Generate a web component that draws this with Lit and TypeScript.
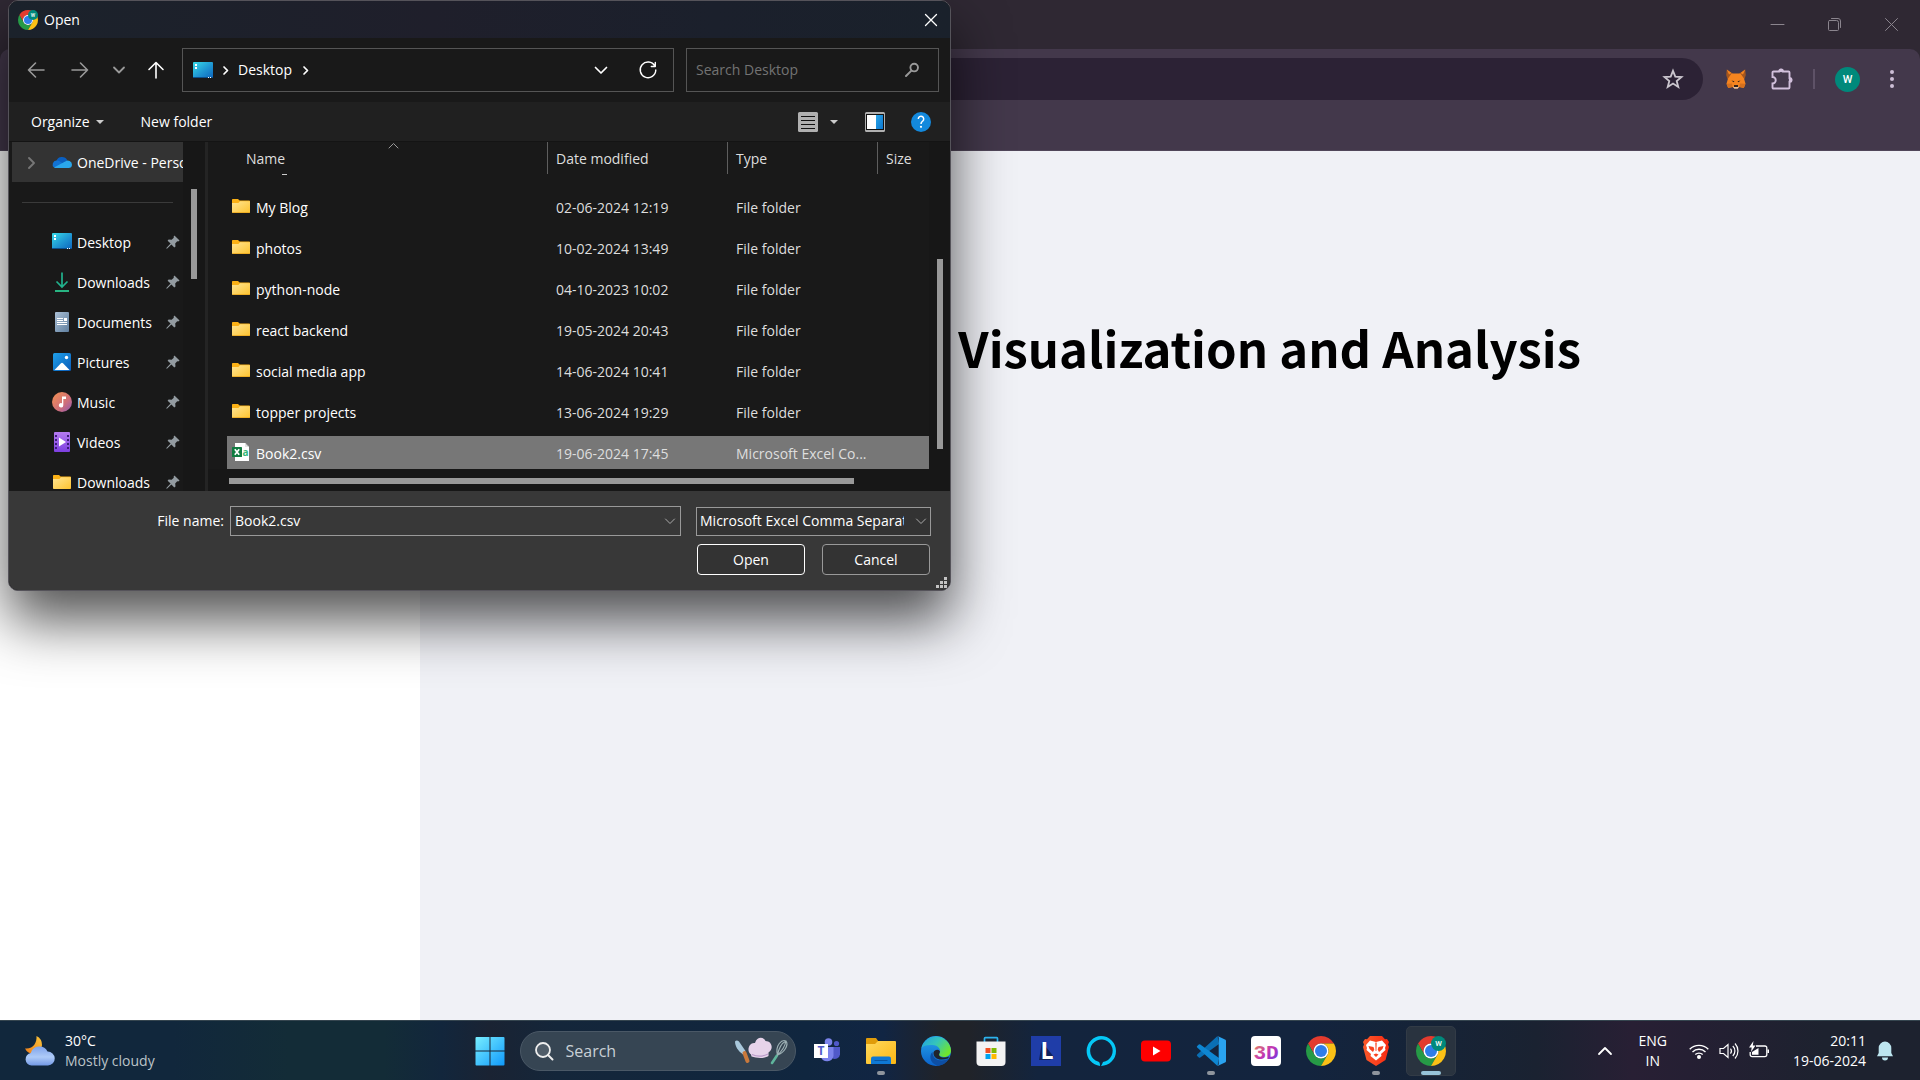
import { LitElement, html, svg, css, nothing, type TemplateResult } from "lit";
import { customElement } from "lit/decorators.js";

/* ---------- shared icons ---------- */

const chrome = (badge: boolean) => html`<svg viewBox="0 0 48 48" aria-hidden="true">
  <path fill="#e33b2e" d="M3.22 12A24 24 0 0 1 44.78 12L24 12A12 12 0 0 0 13.61 30Z" />
  <path fill="#269a46" d="M3.22 12L13.61 30A12 12 0 0 0 34.39 30L24 48A24 24 0 0 1 3.22 12Z" />
  <path fill="#fbc116" d="M44.78 12A24 24 0 0 1 24 48L34.39 30A12 12 0 0 0 24 12Z" />
  <circle cx="24" cy="24" r="12" fill="#fff" />
  <circle cx="24" cy="24" r="9.6" fill="#2f7de9" />
  ${badge
    ? svg`<circle cx="36" cy="12" r="12" fill="#00897b"/><text x="36" y="16.5" text-anchor="middle" font-family="Roboto, sans-serif" font-weight="500" font-size="12" fill="#fff">W</text>`
    : nothing}
</svg>`;

const stroke = (d: string, box = "0 0 16 16", width = 1.4) => html`<svg viewBox=${box} aria-hidden="true">
  <path d=${d} fill="none" stroke="currentColor" stroke-width=${width} stroke-linecap="round" stroke-linejoin="round" />
</svg>`;

const folder = html`<svg viewBox="0 0 18 16" aria-hidden="true">
  <defs><linearGradient id="fo" x1="0" y1="0" x2="1" y2="1"><stop offset="0" stop-color="#ffe594" /><stop offset="1" stop-color="#fdc32f" /></linearGradient></defs>
  <path fill="#fbb116" d="M0 1.8A.8.8 0 0 1 .8 1H6l1.6 1.4H17.2a.8.8 0 0 1 .8.8V6H0Z" />
  <path fill="url(#fo)" d="M0 5H6.4L8 3.2H18V14.2a.8.8 0 0 1-.8.8H.8a.8.8 0 0 1-.8-.8Z" />
  <path fill="#e9a51c" d="M.2 14.2h17.6a.8.8 0 0 1-.6.8H.8a.8.8 0 0 1-.6-.8Z" />
</svg>`;

const desktop = html`<svg viewBox="0 0 20 16" aria-hidden="true">
  <defs><linearGradient id="dk" x1="0" y1="0" x2="1" y2="1"><stop offset="0" stop-color="#38dbe8" /><stop offset=".55" stop-color="#1f96d2" /><stop offset="1" stop-color="#0d65bd" /></linearGradient></defs>
  <rect width="20" height="16" rx="1" fill="url(#dk)" /><rect y="15" width="20" height="1" fill="#0b4f8c" />
  <path fill="#fff" d="M2 2h2v2H2zM2 5h2v2H2zM15 15h1v1h-1zM17 15h1v1h-1z" />
</svg>`;

const pin = html`<svg viewBox="0 0 14 14" aria-hidden="true">
  <path fill="#939ba1" d="M8.4.4L13.6 5.600 12.200 6.400l-1-.2L9.200 8.400l.3 3-1.200 1L5.400 9.400 1.200 13.400.3 13.700.6 12.800 4.600 8.600 1.600 5.700l1-1.200 3 .3L7.800 2.800 7.600 1.800Z" />
</svg>`;

const placeIcons: Record<string, TemplateResult> = {
  cloud: html`<svg viewBox="0 0 20 20" aria-hidden="true">
    <path fill="#0a5fc0" d="M4.400 9A6 6 0 0 1 15.300 8.200L10 13Z" />
    <path fill="#1272d2" d="M4.400 8.600A4 4 0 0 1 7.600 9.200L13 13 2 15.600A4 4 0 0 1 4.400 8.600Z" />
    <path fill="#2aa7ec" d="M2 15.400L13.200 9.400A4.200 4.200 0 0 1 20 12.800 3.400 3.400 0 0 1 16.600 16H4A4 4 0 0 1 2 15.400Z" />
  </svg>`,
  desktop: html`<svg viewBox="0 -2 20 20" aria-hidden="true">
    <defs><linearGradient id="dp" x1="0" y1="0" x2="1" y2="1"><stop offset="0" stop-color="#38dbe8" /><stop offset=".55" stop-color="#1f96d2" /><stop offset="1" stop-color="#0d65bd" /></linearGradient></defs>
    <rect y="-1" width="20" height="16" rx="1" fill="url(#dp)" /><rect y="14" width="20" height="1" fill="#0b4f8c" />
    <path fill="#fff" d="M2 1h2v2H2zM2 4h2v2H2zM15 14h1v1h-1zM17 14h1v1h-1z" />
  </svg>`,
  download: html`<svg viewBox="0 0 20 20" aria-hidden="true">
    <path d="M10 .5V15M4.500 9.500L10 15l5.500-5.500" fill="none" stroke="#21b28d" stroke-width="1.700" />
    <path d="M3 19h14" stroke="#2bc78f" stroke-width="1.800" />
  </svg>`,
  document: html`<svg viewBox="0 0 20 20" aria-hidden="true">
    <defs><linearGradient id="dc" x1="0" y1="0" x2="1" y2="1"><stop offset="0" stop-color="#abc0d6" /><stop offset="1" stop-color="#5f7f9f" /></linearGradient></defs>
    <rect x="3" width="14" height="20" rx="1" fill="url(#dc)" />
    <path stroke="#fff" d="M5 6.500h6M5 8.500h6M5 10.500h10M5 12.500h10" /><rect x="12" y="6" width="3" height="3" fill="#fff" />
  </svg>`,
  picture: html`<svg viewBox="0 0 20 20" aria-hidden="true">
    <defs><linearGradient id="pc" x1="0" y1="0" x2="1" y2="1"><stop offset="0" stop-color="#1fa0ea" /><stop offset="1" stop-color="#0a5cb8" /></linearGradient></defs>
    <rect x="1" y="1" width="18" height="18" rx="1.500" fill="url(#pc)" />
    <path fill="#fff" d="M2.500 18L9 11.200a1.400 1.400 0 0 1 2 0L17.500 18Z" /><circle cx="14.500" cy="5.500" r="1.700" fill="#fff" />
  </svg>`,
  music: html`<svg viewBox="0 0 20 20" aria-hidden="true">
    <defs><linearGradient id="mu" x1="0" y1="0" x2="1" y2="1"><stop offset=".1" stop-color="#ee8c57" /><stop offset=".6" stop-color="#cf6f79" /><stop offset="1" stop-color="#8d57b4" /></linearGradient></defs>
    <circle cx="10" cy="10" r="10" fill="url(#mu)" />
    <path fill="#fff" d="M10 4.500h4V7h-2.700v6.200A2.200 2.200 0 1 1 10 11.200Z" />
  </svg>`,
  video: html`<svg viewBox="0 0 20 20" aria-hidden="true">
    <defs><linearGradient id="vi" x1="0" y1="0" x2="0" y2="1"><stop offset="0" stop-color="#b57bf0" /><stop offset="1" stop-color="#7d3fe0" /></linearGradient></defs>
    <rect x="2" width="16" height="20" rx="1" fill="url(#vi)" />
    <path stroke="#3c1d78" stroke-width="2" stroke-dasharray="2 2" d="M4 3v16M16 3v16" />
    <path fill="#fff" d="M7 5.500L14 10l-7 4.500Z" />
  </svg>`,
  folder: html`<svg viewBox="0 0 20 20" aria-hidden="true">
    <defs><linearGradient id="fp" x1="0" y1="0" x2="1" y2="1"><stop offset="0" stop-color="#ffe594" /><stop offset="1" stop-color="#fdc32f" /></linearGradient></defs>
    <path fill="#fbb116" d="M1 3.800a.8.800 0 0 1 .8-.8H7l1.600 1.400h9.600a.8.800 0 0 1 .8.800V8H1Z" />
    <path fill="url(#fp)" d="M1 7H7.400L9 5.200H19V16.200a.8.800 0 0 1-.8.800H1.800a.8.800 0 0 1-.8-.8Z" />
  </svg>`,
};

const csvIcon = html`<svg viewBox="0 0 18 18" aria-hidden="true">
  <path fill="#fff" d="M3 0H13.500L17 3.500V18H3Z" /><path fill="#777" d="M13.500 0L17 3.500h-3.500Z" /><path fill="#e4e4e4" d="M13 0V4h4L13 0Z" />
  <rect y="4" width="10" height="10" rx=".6" fill="#107c41" />
  <path d="M2.800 6.200L7.200 11.800M7.200 6.200L2.800 11.800" stroke="#fff" stroke-width="1.700" />
  <text x="10.600" y="12.800" font-family="Open Sans, sans-serif" font-size="10" font-weight="700" fill="#35b878">a</text>
</svg>`;

/* ---------- data ---------- */

const places: Array<[string, string]> = [
  ["desktop", "Desktop"],
  ["download", "Downloads"],
  ["document", "Documents"],
  ["picture", "Pictures"],
  ["music", "Music"],
  ["video", "Videos"],
  ["folder", "Downloads"],
];

interface FileRow { name: string; date: string; type: string; selected?: boolean }
const files: FileRow[] = [
  { name: "My Blog", date: "02-06-2024 12:19", type: "File folder" },
  { name: "photos", date: "10-02-2024 13:49", type: "File folder" },
  { name: "python-node", date: "04-10-2023 10:02", type: "File folder" },
  { name: "react backend", date: "19-05-2024 20:43", type: "File folder" },
  { name: "social media app", date: "14-06-2024 10:41", type: "File folder" },
  { name: "topper projects", date: "13-06-2024 19:29", type: "File folder" },
  { name: "Book2.csv", date: "19-06-2024 17:45", type: "Microsoft Excel Co...", selected: true },
];

const base = css`
  :host, *, *::before, *::after { box-sizing: border-box; }
  svg { display: block; width: 100%; height: 100%; overflow: visible; }
  button { font: inherit; color: inherit; background: none; border: 0; padding: 0; margin: 0; }
  input, select { font: inherit; color: inherit; margin: 0; }
`;

/* ---------- open-file dialog ---------- */

@customElement("file-dialog")
export class FileDialog extends LitElement {
  static styles = [base, css`
    :host {
      display: block; width: 943px; border-radius: 10px; overflow: hidden;
      border: 1px solid #55535a; color: #fff; background: #191919;
      font: 14px/20px "Segoe UI", "Open Sans", sans-serif;
      box-shadow: 0 30px 56px rgba(0, 0, 0, .68);
    }
    .title { display: flex; align-items: center; height: 37px; padding: 0 12px 0 9px; gap: 6px;
      background: linear-gradient(90deg, #1b222b, #1f1f2b 45%, #1b202c 75%, #1a212b); }
    .title h2 { flex: 1; margin: 0; font-size: 14px; font-weight: 400; }
    .logo { width: 20px; height: 20px; }
    .close { width: 14px; height: 14px; }
    .nav { display: flex; align-items: center; height: 64px; padding: 0 11px 0 18px; }
    .arrow { width: 18px; height: 18px; color: #999; }
    .arrow + .arrow { margin-left: 26px; }
    .nav .small { width: 14px; height: 14px; margin: 0 21px 0 23px; color: #999; }
    .nav .up { color: #fff; margin-right: 17px; }
    .address { flex: 1; display: flex; align-items: center; height: 44px; border: 1px solid #555; padding: 0 16px 0 10px; }
    .here { color: inherit; text-decoration: none; }
    .screen { width: 20px; height: 16px; margin-right: 8px; }
    .crumb { width: 9px; height: 9px; margin-right: 8px; }
    .crumb.last { margin: 0 auto 0 9px; }
    .drop { width: 14px; height: 14px; margin-right: 31px; }
    .reload { width: 18px; height: 18px; }
    .search { display: flex; align-items: center; width: 253px; height: 44px; border: 1px solid #555; margin-left: 12px; padding: 0 18px 0 9px; }
    .search input { flex: 1; min-width: 0; border: 0; background: none; padding: 0; outline: 0; }
    .search input::placeholder { color: #737373; opacity: 1; }
    .lens { width: 16px; height: 16px; color: #999; }
    .tools { display: flex; align-items: center; height: 39px; padding: 0 19px 0 22px; background: #202020; }
    .organize { display: flex; align-items: center; gap: 6px; margin-right: 37px; }
    .caret { width: 8px; height: 4px; }
    .view { display: flex; align-items: center; gap: 12px; margin-left: auto; margin-right: 27px; }
    .icon20 { width: 20px; height: 20px; }
    .help { margin-left: 26px; }
    .body { display: grid; grid-template-columns: 174px 22px 3px 1fr; height: 350px; overflow: hidden; border-top: 1px solid #141414; }
    .places { margin: 0 0 0 3px; padding: 0; list-style: none; overflow: hidden; }
    .places li { display: flex; align-items: center; height: 40px; padding: 2px 0 0 40px; white-space: nowrap; }
    .places li.drive { background: #333; padding-left: 13px; }
    .places li.rule { padding: 0 10px; }
    .places li.rule::before { content: ""; flex: 1; height: 1px; background: #3a3a3a; }
    .expand { flex: none; width: 12px; height: 12px; margin-right: 15px; color: #777; }
    .places .icon20 { flex: none; margin: 0 5px 2px 0; }
    .pin { width: 14px; height: 14px; margin: 0 3px 2px auto; }
    .track { background: #171717; padding: 47px 8px 0; }
    .thumb { height: 90px; background: #999; }
    .split { background: #242424; }
    .list { display: grid; grid-template-columns: 1fr 21px; grid-template-rows: auto 1fr; }
    table { margin-left: 19px; width: calc(100% - 19px); table-layout: fixed; border-spacing: 0; }
    th { height: 32px; padding: 2px 0 0 8px; border-left: 1px solid #5e5e5e; text-align: left; font-weight: 400; color: #dedede; vertical-align: middle; white-space: nowrap; }
    th:first-child { padding-left: 18px; border-left-color: transparent; position: relative; }
    .sort { position: absolute; left: 160px; top: 0; width: 11px; height: 7px; color: #999; }
    .c1 { width: 320px; } .c2 { width: 180px; } .c3 { width: 150px; }
    td { height: 41px; padding: 2px 0 0 9px; border-top: 8px solid transparent; background-clip: padding-box; color: #dedede; white-space: nowrap; }
    td:first-child { padding-left: 5px; color: #fff; }
    .gap td:first-child { height: 8px; border: 0; padding: 0 0 0 55px; vertical-align: top; line-height: 1px; font-size: 1px; }
    .gap i { display: block; width: 5px; height: 1px; background: #ccc; }
    .picked td { background-color: #777; }
    .name { display: flex; align-items: center; gap: 6px; }
    .glyph { width: 18px; height: 18px; margin-bottom: 4px; }
    .glyph.dir { height: 16px; }
    .vtrack { background: #171717; padding: 117px 7px 0 8px; }
    .vthumb { height: 190px; background: #999; }
    .htrack { grid-column: 1 / 3; background: #171717; padding: 9px 96px 0 21px; }
    .hthumb { height: 6px; background: #999; }
    .foot { display: grid; grid-template-columns: 215px 451px 1fr; align-items: center; background: #383838; height: 99px; padding: 15px 19px 15px 0; column-gap: 6px; align-content: start; row-gap: 8px; }
    .foot label { text-align: right; }
    .combo { display: flex; align-items: center; height: 30px; border: 1px solid #999; padding: 0 4px; }
    .combo input { flex: 1; min-width: 0; border: 0; background: none; padding: 0; outline: 0; }
    .combo button { width: 12px; height: 12px; color: #aaa; }
    .kind { display: grid; align-items: center; margin-left: 9px; height: 29px; }
    .kind select { grid-area: 1 / 1; appearance: none; width: 100%; height: 29px; border: 1px solid #999; border-radius: 0; background: #333; padding: 0 26px 0 3px; text-overflow: clip; overflow: hidden; }
    .kind span { grid-area: 1 / 1; justify-self: end; width: 12px; height: 12px; margin-right: 4px; color: #aaa; pointer-events: none; }
    .actions { grid-column: 3; display: grid; grid-template-columns: 1fr 1fr; gap: 17px; margin: 0 1px 0 10px; }
    .actions button { height: 31px; border: 1px solid #999; border-radius: 4px; background: #333; }
    .actions .main { border-color: #fff; }
    .grip { position: absolute; right: 3px; bottom: 2px; width: 11px; height: 11px; }
  `];

  render() {
    return html`
      <header class="title">
        <span class="logo">${chrome(true)}</span>
        <h2>Open</h2>
        <button class="close" aria-label="Close">${stroke("M1.500 1.500L12.500 12.500M12.500 1.500L1.500 12.500", "0 0 14 14", 1.3)}</button>
      </header>
      <nav class="nav">
        <button class="arrow" aria-label="Back">${stroke("M17 9H1.500M8.500 2L1.500 9l7 7", "0 0 18 18", 1.6)}</button>
        <button class="arrow" aria-label="Forward">${stroke("M1 9H16.500M9.500 2l7 7-7 7", "0 0 18 18", 1.6)}</button>
        <button class="small" aria-label="Recent locations">${stroke("M2 4.500L7 9.500l5-5", "0 0 14 14", 1.8)}</button>
        <button class="arrow up" aria-label="Up">${stroke("M9 17V1.500M2 8.500l7-7 7 7", "0 0 18 18", 1.6)}</button>
        <div class="address">
          <span class="screen">${desktop}</span>
          <span class="crumb">${stroke("M3 1l3.500 3.500L3 8", "0 0 9 9", 1.7)}</span>
          <a class="here" href="#desktop">Desktop</a>
          <span class="crumb last">${stroke("M3 1l3.500 3.500L3 8", "0 0 9 9", 1.7)}</span>
          <button class="drop" aria-label="Previous locations">${stroke("M1.500 4.500L7 10l5.500-5.500", "0 0 14 14", 1.7)}</button>
          <button class="reload" aria-label="Refresh">${stroke("M15.800 5A7.800 7.800 0 1 0 16.800 9M16.300 1.500V5.500H12.300", "0 0 18 18", 1.4)}</button>
        </div>
        <div class="search">
          <input type="text" aria-label="Search Desktop" placeholder="Search Desktop" />
          <span class="lens"><svg viewBox="0 0 16 16"><circle cx="10.200" cy="5.600" r="3.800" fill="none" stroke="currentColor" stroke-width="1.900" /><path d="M7.400 8.600L2 14" stroke="currentColor" stroke-width="2" stroke-linecap="round" /></svg></span>
        </div>
      </nav>
      <div class="tools">
        <button class="organize">Organize <span class="caret"><svg viewBox="0 0 8 4"><path fill="#ccc" d="M0 0h8L4 4Z" /></svg></span></button>
        <button>New folder</button>
        <button class="view" aria-label="Change view">
          <span class="icon20"><svg viewBox="0 0 20 20"><rect width="20" height="20" rx="1.500" fill="#b0b0b0" /><path stroke="#111" d="M3 4.500h14M3 8.500h14M3 12.500h14M3 16.500h14" /></svg></span>
          <span class="caret"><svg viewBox="0 0 8 4"><path fill="#ccc" d="M0 0h8L4 4Z" /></svg></span>
        </button>
        <button class="icon20" aria-label="Preview pane"><svg viewBox="0 0 20 20">
          <defs><linearGradient id="pv" x1="0" y1="0" x2="1" y2="1"><stop offset="0" stop-color="#2aa5e8" /><stop offset="1" stop-color="#0b76cf" /></linearGradient></defs>
          <rect width="20" height="20" rx="1.500" fill="#b0b0b0" /><rect x="1" y="2" width="18" height="16" fill="#111" /><rect x="2" y="3" width="9" height="14" fill="#fff" /><rect x="11" y="3" width="7" height="14" fill="url(#pv)" /></svg></button>
        <button class="icon20 help" aria-label="Help"><svg viewBox="0 0 20 20">
          <circle cx="10" cy="10" r="10" fill="#1389dd" /><path d="M7.300 7a2.700 2.700 0 1 1 4.500 2c-1 .9-1.800 1.400-1.800 3" fill="none" stroke="#fff" stroke-width="1.500" /><circle cx="10" cy="14.800" r="1.100" fill="#fff" /></svg></button>
      </div>
      <div class="body">
        <ul class="places">
          <li class="drive"><span class="expand">${stroke("M4 1l5 5-5 5", "0 0 12 12", 1.9)}</span><span class="icon20">${placeIcons.cloud}</span>OneDrive - Personal</li>
          <li class="rule"></li>
          ${places.map(([icon, label]) => html`<li><span class="icon20">${placeIcons[icon]}</span>${label}<span class="pin">${pin}</span></li>`)}
        </ul>
        <div class="track"><div class="thumb"></div></div>
        <div class="split"></div>
        <div class="list">
          <table>
            <colgroup><col class="c1" /><col class="c2" /><col class="c3" /><col /></colgroup>
            <thead><tr>
              <th scope="col">Name<span class="sort">${stroke("M1 6L5.500 1.500 10 6", "0 0 11 7", 1)}</span></th>
              <th scope="col">Date modified</th><th scope="col">Type</th><th scope="col">Size</th>
            </tr></thead>
            <tbody>
              <tr class="gap" aria-hidden="true"><td colspan="4"><i></i></td></tr>
              ${files.map((f) => html`<tr class=${f.selected ? "picked" : "plain"}>
                <td><span class="name"><span class=${f.selected ? "glyph" : "glyph dir"}>${f.selected ? csvIcon : folder}</span>${f.name}</span></td>
                <td>${f.date}</td><td>${f.type}</td><td></td>
              </tr>`)}
            </tbody>
          </table>
          <div class="vtrack"><div class="vthumb"></div></div>
          <div class="htrack"><div class="hthumb"></div></div>
        </div>
      </div>
      <footer class="foot">
        <label for="file">File name:</label>
        <div class="combo">
          <input id="file" type="text" value="Book2.csv" />
          <button aria-label="Show file names">${stroke("M1.500 4L6 8.500 10.500 4", "0 0 12 12", 1)}</button>
        </div>
        <div class="kind">
          <select aria-label="File type"><option>Microsoft Excel Comma Separated Values File</option></select>
          <span>${stroke("M1.500 4L6 8.500 10.500 4", "0 0 12 12", 1)}</span>
        </div>
        <div class="actions"><button class="main">Open</button><button>Cancel</button></div>
      </footer>
      <span class="grip"><svg viewBox="0 0 11 11"><path fill="#c4c4c4" d="M8 0h3v3H8zM8 4h3v3H8zM4 4h3v3H4zM8 8h3v3H8zM4 8h3v3H4zM0 8h3v3H0z" /></svg></span>
    `;
  }
}

/* ---------- browser frame ---------- */

@customElement("browser-frame")
export class BrowserFrame extends LitElement {
  static styles = [base, css`
    :host { display: block; background: #2f2833; color: #c9bccf; font-family: Roboto, sans-serif; }
    .caption { display: flex; align-items: center; justify-content: flex-end; height: 49px; padding: 0 21px; gap: 42px; color: #8b858e; }
    .caption button { width: 15px; height: 15px; }
    .bar { display: flex; height: 102px; padding: 9px 18px 0 100px; background: #43384b; border-radius: 10px 10px 0 0; border-bottom: 1px solid #51475a; }
    .pill { display: flex; flex: 1; align-items: center; justify-content: flex-end; height: 42px; border-radius: 21px; background: #2c2235; padding-right: 20px; }
    .icon20 { width: 20px; height: 20px; }
    .group { display: flex; align-items: center; height: 42px; padding-left: 23px; }
    .puzzle { width: 22px; height: 22px; margin-left: 25px; }
    .bar i { width: 2px; height: 20px; margin: 0 20px; background: #5e5267; }
    .avatar { width: 25px; height: 25px; border-radius: 50%; background: #00897b; color: #fff; font-size: 11px; font-weight: 500; }
    .more { width: 20px; height: 20px; margin-left: 22px; }
  `];

  render() {
    return html`
      <div class="caption">
        <button aria-label="Minimize">${stroke("M1 7.500H14", "0 0 15 15", 1)}</button>
        <button aria-label="Restore">${stroke("M2.500 3.500h7a2 2 0 0 1 2 2v7a1 1 0 0 1-1 1h-8a1 1 0 0 1-1-1v-8a1 1 0 0 1 1-1ZM4.500 1.500H11a2.500 2.500 0 0 1 2.500 2.500V10.500", "0 0 15 15", 1)}</button>
        <button aria-label="Close window">${stroke("M1.500 1.500l12 12M13.500 1.500l-12 12", "0 0 15 15", 1)}</button>
      </div>
      <div class="bar">
        <div class="pill"><button class="icon20" aria-label="Bookmark this page"><svg viewBox="0 0 20 20"><path d="M10 1.800l2.300 5.800 6.200.4-4.800 4 1.600 6L10 14.600 4.700 18l1.600-6-4.800-4 6.200-.4Z" fill="none" stroke="#cbc6ce" stroke-width="1.800" /></svg></button></div>
        <div class="group">
          <button class="icon20" aria-label="Wallet extension"><svg viewBox="0 0 20 20">
            <path fill="#a4561f" d="M.8.500L8 5.500H12L19.200.500 19.800 6 18.500 10H1.500L.2 6Z" />
            <path fill="#f5841f" d="M5.500 4.500h9L18 9.500l1.500 5.200L17.800 19l-4.300-1L11.500 19.400H8.500L6.500 18l-4.300 1L.5 14.700 2 9.500Z" />
            <path fill="#f5841f" d="M.8.500L5.500 4 3 5.500ZM19.200.500L14.500 4 17 5.500Z" />
            <path fill="#d5701d" d="M.5 14.700L6 14.500 6.500 18l-4.300 1ZM19.500 14.700L14 14.500 13.500 18l4.300 1Z" />
            <path fill="#33231b" d="M5.500 11.500l3 .8-1 1ZM14.500 11.500l-3 .8 1 1ZM8 16h4v2H8Z" /><path fill="#e6d5c4" d="M7 17.600l1.500.6h3l1.500-.6-1.200 2H8.200Z" />
          </svg></button>
          <button class="puzzle" aria-label="Extensions"><svg viewBox="0 0 22 22"><path d="M2.500 3.500h5.500a1.800 1.800 0 0 1 4 0H17.500a1 1 0 0 1 1 1V10a1.800 1.800 0 0 1 0 4v5.500a1 1 0 0 1-1 1H2.500a1 1 0 0 1-1-1V15.500a3 3 0 0 0 0-6.500V4.500a1 1 0 0 1 1-1Z" fill="none" stroke="#d2c0dc" stroke-width="1.900" /><circle cx="10" cy="2.500" r="1.800" fill="#d2c0dc" /><circle cx="19.500" cy="12" r="1.800" fill="#d2c0dc" /></svg></button>
          <i></i>
          <button class="avatar" aria-label="Profile">W</button>
          <button class="more" aria-label="Menu"><svg viewBox="0 0 20 20" fill="#cdbed6"><circle cx="10" cy="3" r="2" /><circle cx="10" cy="10" r="2" /><circle cx="10" cy="17" r="2" /></svg></button>
        </div>
      </div>
    `;
  }
}

/* ---------- taskbar ---------- */

const apps: Array<{ name: string; icon: TemplateResult; state?: "open" | "active" }> = [
  { name: "Teams", icon: html`<svg viewBox="0 0 30 30">
      <circle cx="17.500" cy="6" r="3.800" fill="#7b83eb" /><circle cx="25.500" cy="7.500" r="2.600" fill="#5059c9" />
      <path fill="#5059c9" d="M19 11h10v7.500a5 5 0 0 1-8 3.500Z" /><path fill="#7b83eb" d="M10 11H22.500V20a6.500 6.500 0 0 1-12.500 1Z" />
      <rect x="3" y="8" width="14" height="14" fill="#fff" /><text x="10" y="19" text-anchor="middle" font-family="Open Sans, sans-serif" font-weight="700" font-size="12" fill="#5059c9">T</text></svg>` },
  { name: "File Explorer", state: "open", icon: html`<svg viewBox="0 0 30 30">
      <defs><linearGradient id="ex" x1="0" y1="0" x2="1" y2="1"><stop offset="0" stop-color="#ffd95e" /><stop offset="1" stop-color="#fcb713" /></linearGradient></defs>
      <path fill="#e09c0a" d="M0 3a1 1 0 0 1 1-1h9l2.500 3.500H20V10H0Z" /><path fill="url(#ex)" d="M0 8h9l3-3h17a1 1 0 0 1 1 1v21a1 1 0 0 1-1 1H1a1 1 0 0 1-1-1Z" />
      <path fill="#0f78d4" d="M5 28v-5.500a2 2 0 0 1 2-2h16a2 2 0 0 1 2 2V28Z" /><path stroke="#0a55a0" d="M8.500 24.500h13" /></svg>` },
  { name: "Edge", icon: html`<svg viewBox="0 0 30 30">
      <defs><linearGradient id="e1" x1="0" y1="0" x2="1" y2=".6"><stop offset="0" stop-color="#1f9fe0" /><stop offset=".5" stop-color="#35c5bb" /><stop offset="1" stop-color="#6fe52d" /></linearGradient>
      <linearGradient id="e2" x1="0" y1="0" x2="0" y2="1"><stop offset="0" stop-color="#28a8ea" /><stop offset="1" stop-color="#0a62cc" /></linearGradient></defs>
      <circle cx="15" cy="15" r="15" fill="url(#e2)" />
      <path fill="url(#e1)" d="M.5 12A15 15 0 0 1 30 14.500c0 4-3 6.500-7 6.500-4.500 0-6-1.800-4.600-3.400C21 14 17 9 11.500 9 6 8.600 2 10 .5 12Z" />
      <path fill="#0d4ea3" d="M11.500 16c0 7 7 11 16.300 6.800A15 15 0 0 1 17 29.900C8 27 8 19 11.500 16Z" />
      <path fill="#20242d" d="M12.500 16.500c1-3 4.500-3.500 6.300-1.600.4 1-.3 2.200-.6 3C17.500 21 22 22.500 28 20.500c-.2 1-.6 1.500-1 2C18 25.500 12 22 12.500 16.500Z" /></svg>` },
  { name: "Microsoft Store", icon: html`<svg viewBox="0 0 30 30">
      <path d="M8.500 7V2.500a.8.800 0 0 1 .8-.8h11.400a.8.800 0 0 1 .8.800V7" fill="none" stroke="#2cb3ee" stroke-width="1.700" />
      <path fill="#f3f3f3" d="M.5 5.500h29V26a4 4 0 0 1-4 4h-21a4 4 0 0 1-4-4Z" /><path fill="#f25022" d="M9.500 12h5v5h-5z" /><path fill="#7fba00" d="M15.500 12h5v5h-5z" /><path fill="#00a4ef" d="M9.500 18h5v5h-5z" /><path fill="#ffb900" d="M15.500 18h5v5h-5z" /></svg>` },
  { name: "L", icon: html`<svg viewBox="0 0 30 30"><rect width="30" height="30" fill="#1f3da8" /><path fill="#10225e" d="M11 6L8 24h11l4-3Z" /><text x="16" y="23" text-anchor="middle" font-family="Open Sans, sans-serif" font-weight="700" font-size="23" fill="#fff">L</text></svg>` },
  { name: "Alexa", icon: html`<svg viewBox="0 0 30 30"><path fill="#05c8f7" fill-rule="evenodd" d="M15 0a15 15 0 0 1 0 30 20 20 0 0 0 2-4 11.300 11.300 0 1 0-5-.4c1.500.6 2 1.600 2 4.300A15 15 0 0 1 15 0Z" /></svg>` },
  { name: "YouTube", icon: html`<svg viewBox="0 0 30 30"><rect y="4.500" width="30" height="21" rx="4" fill="#fe0000" /><path fill="#fff" d="M12 10.500L19.500 15 12 19.500Z" /></svg>` },
  { name: "Visual Studio Code", state: "open", icon: html`<svg viewBox="0 0 30 30">
      <path fill="#0a6fb5" d="M21.500 0L1.200 18.500a1 1 0 0 0 0 1.500l1.600 1.500a1.200 1.200 0 0 0 1.500 0L23 8Z" />
      <path fill="#0e86d2" d="M21.500 30L1.200 11.500a1 1 0 0 1 0-1.500l1.600-1.500a1.200 1.200 0 0 1 1.500 0L23 22Z" />
      <path fill="#2aa3f0" d="M21.500 0L29 3.500a1.500 1.500 0 0 1 1 1.500v20a1.500 1.500 0 0 1-1 1.500L21.500 30c1-1 1.200-1.500 1.200-2V2c0-.8-.2-1.300-1.200-2Z" /></svg>` },
  { name: "3D", icon: html`<svg viewBox="0 0 30 30">
      <defs><linearGradient id="td" x1="0" y1="0" x2="1" y2="1"><stop offset="0" stop-color="#e8944f" /><stop offset=".5" stop-color="#c437b4" /><stop offset="1" stop-color="#5b35e8" /></linearGradient></defs>
      <rect width="30" height="30" rx="4" fill="#fff" /><text x="15" y="22.500" text-anchor="middle" font-family="Liberation Mono, monospace" font-weight="700" font-size="21" fill="url(#td)">3D</text></svg>` },
  { name: "Chrome", icon: chrome(false) },
  { name: "Brave", state: "open", icon: html`<svg viewBox="0 0 30 30">
      <defs><linearGradient id="br" x1="0" y1="0" x2="1" y2="0"><stop offset="0" stop-color="#fb5a2a" /><stop offset="1" stop-color="#f82a12" /></linearGradient></defs>
      <path fill="url(#br)" d="M9 0H21L24 3.200 26 3 28 6 27 8.500 28 11 24.500 24 15 30 5.500 24 2 11 3 8.500 2 6 4 3 6 3.200Z" />
      <path fill="#fff" d="M9 4.500L15 6l6-1.500 4 4.500-1 3 .5 2-4.500 4 .5 2L15 24.500 9.500 20l.5-2-4.500-4L6 12 5 9Z" />
      <path fill="#f9431f" d="M7.500 10l5 1 .8 2.500L12 16 8.500 13ZM22.500 10l-5 1-.8 2.500L18 16l3.500-3ZM12.500 18.500L15 17.500l2.500 1L15 21ZM14.300 6.500h1.400L15.400 15h-.8Z" /></svg>` },
  { name: "Chrome, W profile", state: "active", icon: chrome(true) },
];

@customElement("task-bar")
export class TaskBar extends LitElement {
  static styles = [base, css`
    :host { display: grid; grid-template-columns: 1fr auto 1fr; align-items: center; height: 60px; border-top: 1px solid #35454f; color: #fff;
      font: 14px/20px "Segoe UI", "Open Sans", sans-serif;
      background: linear-gradient(90deg, #11273c 0%, #11273c 9%, #132c37 15%, #132c37 20%, #12263c 23%, #1a2333 25.500%, #14263a 29%, #10263f 42%, #112543 46%, #202329 49%, #202329 50.500%, #13243d 54%, #13243e 68%, #162336 75%, #1a2231 80%, #281f34 85%, #251f33 88%, #1d222f 95%, #1d222f 100%); }
    .weather { display: flex; align-items: center; gap: 10px; padding-left: 25px; justify-self: start; text-align: left; }
    .weather svg { width: 30px; height: 30px; }
    .weather span { display: block; }
    .dim { color: #bcc3c8; }
    .apps { display: flex; align-items: center; gap: 5px; }
    .app { display: grid; place-items: center; position: relative; width: 50px; height: 50px; border-radius: 5px; }
    .app svg { width: 30px; height: 30px; }
    .open::after, .active::after { content: ""; position: absolute; left: 50%; bottom: 1px; width: 8px; height: 4px; margin-left: -4px; border-radius: 2px; background: #8f959d; }
    .active { background: #29333f; border: 1px solid #323b46; }
    .active::after { width: 20px; margin-left: -10px; bottom: 0; background: #97c3d8; }
    .find { display: flex; align-items: center; gap: 13px; width: 276px; height: 40px; border-radius: 20px; background: #364553; border: 1px solid #4a5866; padding: 0 7px 0 14px; }
    .find svg { width: 18px; height: 18px; }
    .find input { flex: 1; min-width: 0; border: 0; background: none; padding: 0; outline: 0; font-size: 16px; }
    .find input::placeholder { color: #c9d0d6; opacity: 1; }
    .find .chef { width: 54px; height: 27px; }
    .tray { display: flex; align-items: center; justify-self: end; padding-right: 25px; }
    .tray svg { width: 20px; height: 20px; }
    .tray .up svg { width: 16px; height: 16px; }
    .lang { margin: 0 22px 0 26px; text-align: center; }
    .quick { display: flex; gap: 10px; }
    .clock { min-width: 76px; margin: 0 9px 0 21px; text-align: right; }
    .clock span, .lang span { display: block; }
  `];

  render() {
    return html`
      <button class="weather">
        <svg viewBox="0 0 30 30">
          <defs><linearGradient id="mo" x1="1" y1="0" x2="0" y2="1"><stop offset="0" stop-color="#fbc73a" /><stop offset="1" stop-color="#ef7d1a" /></linearGradient>
          <linearGradient id="cl" x1="0" y1="0" x2="0" y2="1"><stop offset="0" stop-color="#7fa3ea" /><stop offset=".55" stop-color="#aecbf8" /><stop offset="1" stop-color="#7399e6" /></linearGradient></defs>
          <path fill="url(#mo)" d="M11.500 0A10 10 0 0 1 17 9 9 9 0 0 1 0 12.500C8 13.500 12 7 11.500 0Z" />
          <path fill="url(#cl)" d="M6.500 29.500a6.300 6.300 0 0 1-.7-12.500A9 9 0 0 1 22.500 15.500 7 7 0 0 1 23 29.500Z" />
        </svg>
        <span><span>30°C</span><span class="dim">Mostly cloudy</span></span>
      </button>
      <div class="apps">
        <button class="app" aria-label="Start"><svg viewBox="0 0 30 30">
          <defs><linearGradient id="wn" gradientUnits="userSpaceOnUse" x1="0" y1="0" x2="30" y2="30"><stop offset="0" stop-color="#7af0ff" /><stop offset="1" stop-color="#0e98fb" /></linearGradient></defs>
          <path fill="url(#wn)" d="M.5 2a1 1 0 0 1 1-1H14.500V14.500H.5ZM15.500 1H28.500a1 1 0 0 1 1 1V14.500H15.500ZM.5 15.500H14.500V29.500H1.500a1 1 0 0 1-1-1ZM15.500 15.500H29.500V28.500a1 1 0 0 1-1 1H15.500Z" /></svg></button>
        <div class="find">
          <svg viewBox="0 0 18 18"><circle cx="8" cy="8" r="7" fill="#ffffff22" stroke="#eee" stroke-width="1.800" /><path d="M13 13l4.500 4.500" stroke="#eee" stroke-width="2" stroke-linecap="round" /></svg>
          <input type="text" aria-label="Search" placeholder="Search" />
          <svg class="chef" viewBox="0 0 54 27">
            <path fill="#a9c8dc" d="M1 4.500C2 3 3.500 3 5 4.500L11.500 14 9 17.500C4 14 1 9 1 4.500Z" /><path d="M10.500 16l3 8" stroke="#c9793c" stroke-width="4" stroke-linecap="round" />
            <path fill="#e6d3ea" d="M17 17.500C12 14 15 5 21 6 23-1 30 0 31.500 4 38 4 40 12 34.500 15.500V19C30 22 22 21 17.500 19.500Z" /><path d="M18 17.500q8 3.500 16-.500" fill="none" stroke="#b99ac8" stroke-width="1.200" />
            <path d="M43 18.500L38 26" stroke="#5fb59c" stroke-width="2.600" stroke-linecap="round" /><path d="M43.500 18C41 8 48 2 52 4 55 8 50 16 43.500 18ZM43.500 18C45 10 48 6 52 4M43.500 18C48 14 51 9 52 4" fill="none" stroke="#9db0b4" stroke-width="1.200" /></svg>
        </div>
        ${apps.map((a) => html`<button class="app ${a.state ?? ""}" aria-label=${a.name}>${a.icon}</button>`)}
      </div>
      <div class="tray">
        <button class="up" aria-label="Show hidden icons">${stroke("M2 11l6-6 6 6", "0 0 16 16", 1.8)}</button>
        <button class="lang"><span>ENG</span><span>IN</span></button>
        <button class="quick" aria-label="Network, volume and battery">
          <svg viewBox="0 0 20 20" fill="none" stroke="#fff" stroke-width="1.400"><path d="M.7 8.200a13.200 13.200 0 0 1 18.600 0M3.500 11a9.200 9.200 0 0 1 13 0M6.300 13.600a5.300 5.300 0 0 1 7.400 0" /><circle cx="10" cy="16" r="1.300" fill="#fff" /></svg>
          <svg viewBox="0 0 20 20" fill="none" stroke="#fff" stroke-width="1.200"><path d="M1 7.500H4.500L9 3.500V16.500L4.500 12.500H1ZM11.500 7.500a4 4 0 0 1 0 5M13.800 5a7 7 0 0 1 0 10M16 2.500a11 11 0 0 1 0 15" /></svg>
          <svg viewBox="0 0 20 20"><path d="M7 5H16a1.800 1.800 0 0 1 1.800 1.800v7A1.800 1.800 0 0 1 16 15.600H3A1.800 1.800 0 0 1 1.200 13.800V11" fill="none" stroke="#fff" stroke-width="1.300" /><path fill="#fff" d="M18.500 8.500h1.500v3.500h-1.500zM3 13.800V11L9.500 7v6.800ZM4.500 0L0 6.500H2.700L2 11 6.500 4.500H3.800Z" /></svg>
        </button>
        <button class="clock"><span>20:11</span><span>19-06-2024</span></button>
        <button aria-label="Notifications"><svg viewBox="0 0 20 20"><path fill="#bde6f0" d="M10 .5A6.500 6.500 0 0 0 3.700 7v5L2 15.200H18L16.300 12V7A6.500 6.500 0 0 0 10 .5ZM7 16.500h6a3 3 0 0 1-6 0Z" /></svg></button>
      </div>
    `;
  }
}

/* ---------- page ---------- */

@customElement("app-root")
export class AppRoot extends LitElement {
  static styles = css`
    :host { display: flex; flex-direction: column; min-height: 100vh; position: relative; overflow: hidden; background: #fff; }
    .page { flex: 1; display: grid; grid-template-columns: 420px 1fr; }
    main { background: #f0f1f6; padding: 163px 24px 24px; }
    h1 { max-width: 822px; margin: 0 auto; text-align: right; color: #000; font: 700 49px/66px "Noto Sans CJK JP", "Open Sans", sans-serif; }
    file-dialog { position: absolute; left: 8px; top: 0; }
  `;

  render() {
    return html`
      <browser-frame></browser-frame>
      <div class="page">
        <aside></aside>
        <main><h1>Visualization and Analysis</h1></main>
      </div>
      <task-bar></task-bar>
      <file-dialog role="dialog" aria-label="Open"></file-dialog>
    `;
  }
}
